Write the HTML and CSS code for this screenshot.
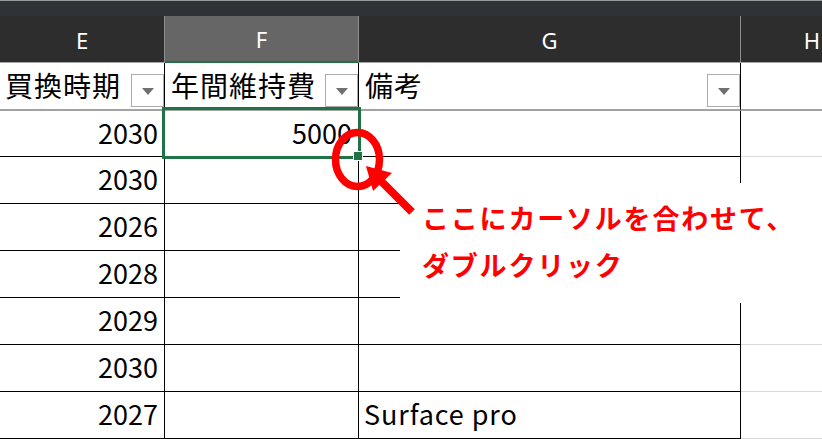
FILE: index.html
```html
<!DOCTYPE html>
<html lang="ja">
<head>
<meta charset="utf-8">
<title>Excel</title>
<link rel="stylesheet" href="styles.css">
</head>
<body>
<div class="sheet">
  <div class="topbar"></div>
  <div class="colheads">
    <div class="ch e">E</div>
    <div class="ch f">F</div>
    <div class="ch g">G</div>
    <div class="ch h">H</div>
  </div>
  <div class="row hdr">
    <div class="c e"><span class="t">買換時期</span><span class="dd"></span></div>
    <div class="c f"><span class="t">年間維持費</span><span class="dd"></span></div>
    <div class="c g"><span class="t">備考</span><span class="dd"></span></div>
    <div class="c h"></div>
  </div>
  <div class="row first">
    <div class="c e num">2030</div>
    <div class="c f num">5000</div>
    <div class="c g"></div>
    <div class="c h"></div>
  </div>
  <div class="row">
    <div class="c e num">2030</div>
    <div class="c f"></div>
    <div class="c g"></div>
    <div class="c h"></div>
  </div>
  <div class="row">
    <div class="c e num">2026</div>
    <div class="c f"></div>
    <div class="c g"></div>
    <div class="c h"></div>
  </div>
  <div class="row">
    <div class="c e num">2028</div>
    <div class="c f"></div>
    <div class="c g"></div>
    <div class="c h"></div>
  </div>
  <div class="row">
    <div class="c e num">2029</div>
    <div class="c f"></div>
    <div class="c g"></div>
    <div class="c h"></div>
  </div>
  <div class="row">
    <div class="c e num">2030</div>
    <div class="c f"></div>
    <div class="c g"></div>
    <div class="c h"></div>
  </div>
  <div class="row">
    <div class="c e num">2027</div>
    <div class="c f"></div>
    <div class="c g txt">Surface pro</div>
    <div class="c h"></div>
  </div>

  <div class="selection"><span class="handle"></span></div>
  <div class="note">ここにカーソルを合わせて、<br>ダブルクリック</div>
  <svg class="mark" width="822" height="439" viewBox="0 0 822 439">
    <ellipse cx="357.5" cy="159.5" rx="22" ry="27" fill="none" stroke="#ff0000" stroke-width="7.5"/>
    <line x1="378" y1="178" x2="412" y2="212" stroke="#ff0000" stroke-width="8"/>
    <polygon points="366,166 392,173 373,191" fill="#ff0000"/>
  </svg>
</div>
</body>
</html>
```
FILE: styles.css
```css
* { box-sizing: border-box; }
html, body { margin: 0; padding: 0; background: #fff; }
body { width: 822px; height: 439px; overflow: hidden; }

.sheet {
  position: relative;
  width: 822px;
  height: 439px;
  overflow: hidden;
  font-family: "Noto Sans CJK JP", "Noto Sans", sans-serif;
  color: #000;
}

.topbar {
  height: 16px;
  background: #2f3237;
  border-top: 1px solid #9a9a9a;
}

.colheads {
  display: flex;
  height: 47px;
  background: #2d2d2d;
}
.ch {
  flex: none;
  display: flex;
  align-items: center;
  justify-content: center;
  color: #fff;
  font-family: "Noto Sans", "Open Sans", sans-serif;
  font-size: 22px;
  border-right: 1px solid #8e8e8e;
  border-bottom: 1px solid #a6a6a6;
  padding-top: 1px;
}
.ch.f {
  background: #666666;
  border-bottom: 2px solid #217346;
}
.ch.h { border-right: none; }

.e { width: 165px; }
.f { width: 194px; }
.g { width: 382px; }
.h { width: 142px; }

.row {
  display: flex;
  height: 47px;
}
.row.hdr { height: 48px; }
.row.first { height: 46px; }

.c {
  flex: none;
  display: flex;
  align-items: center;
  border-right: 1px solid #000;
  border-bottom: 1px solid #000;
  font-size: 27px;
  padding-bottom: 3px;
}
.c.h {
  border-right: none;
  border-bottom: 1px solid #dadada;
}

.hdr .c {
  border-bottom: 2px solid #a3a3a3;
  justify-content: space-between;
  align-items: flex-start;
  padding-bottom: 0;
}
.hdr .c.e .t { padding-left: 5px; }
.hdr .c.f .t { padding-left: 6px; }
.hdr .c.g .t { padding-left: 6px; }
.hdr .t {
  font-size: 28px;
  letter-spacing: 1px;
  line-height: 46px;
  margin-top: -1px;
  white-space: nowrap;
}
.dd {
  width: 33px;
  height: 33px;
  margin-top: 11px;
  border: 1px solid #ababab;
  background: #fff;
  display: flex;
  align-items: center;
  justify-content: center;
}
.dd::after {
  content: "";
  width: 0;
  height: 0;
  border-left: 6.5px solid transparent;
  border-right: 6.5px solid transparent;
  border-top: 7px solid #6f6f6f;
  margin-top: 2px;
}

.num {
  justify-content: flex-end;
  padding-right: 6px;
}
.txt {
  padding-left: 5px;
  letter-spacing: 0.9px;
}

.selection {
  position: absolute;
  left: 162px;
  top: 107px;
  width: 199px;
  height: 52px;
  border: 3px solid #217346;
}
.handle {
  position: absolute;
  left: 188px;
  top: 41px;
  width: 10px;
  height: 10px;
  background: #217346;
  border: 1px solid #fff;
}

.note {
  position: absolute;
  left: 400px;
  top: 183px;
  width: 422px;
  height: 120px;
  background: #fff;
  padding: 11px 0 0 22px;
  color: #ff0000;
  font-weight: 700;
  font-size: 27px;
  letter-spacing: 1.8px;
  line-height: 47px;
  white-space: nowrap;
}

.mark {
  position: absolute;
  left: 0;
  top: 0;
  pointer-events: none;
}
```
